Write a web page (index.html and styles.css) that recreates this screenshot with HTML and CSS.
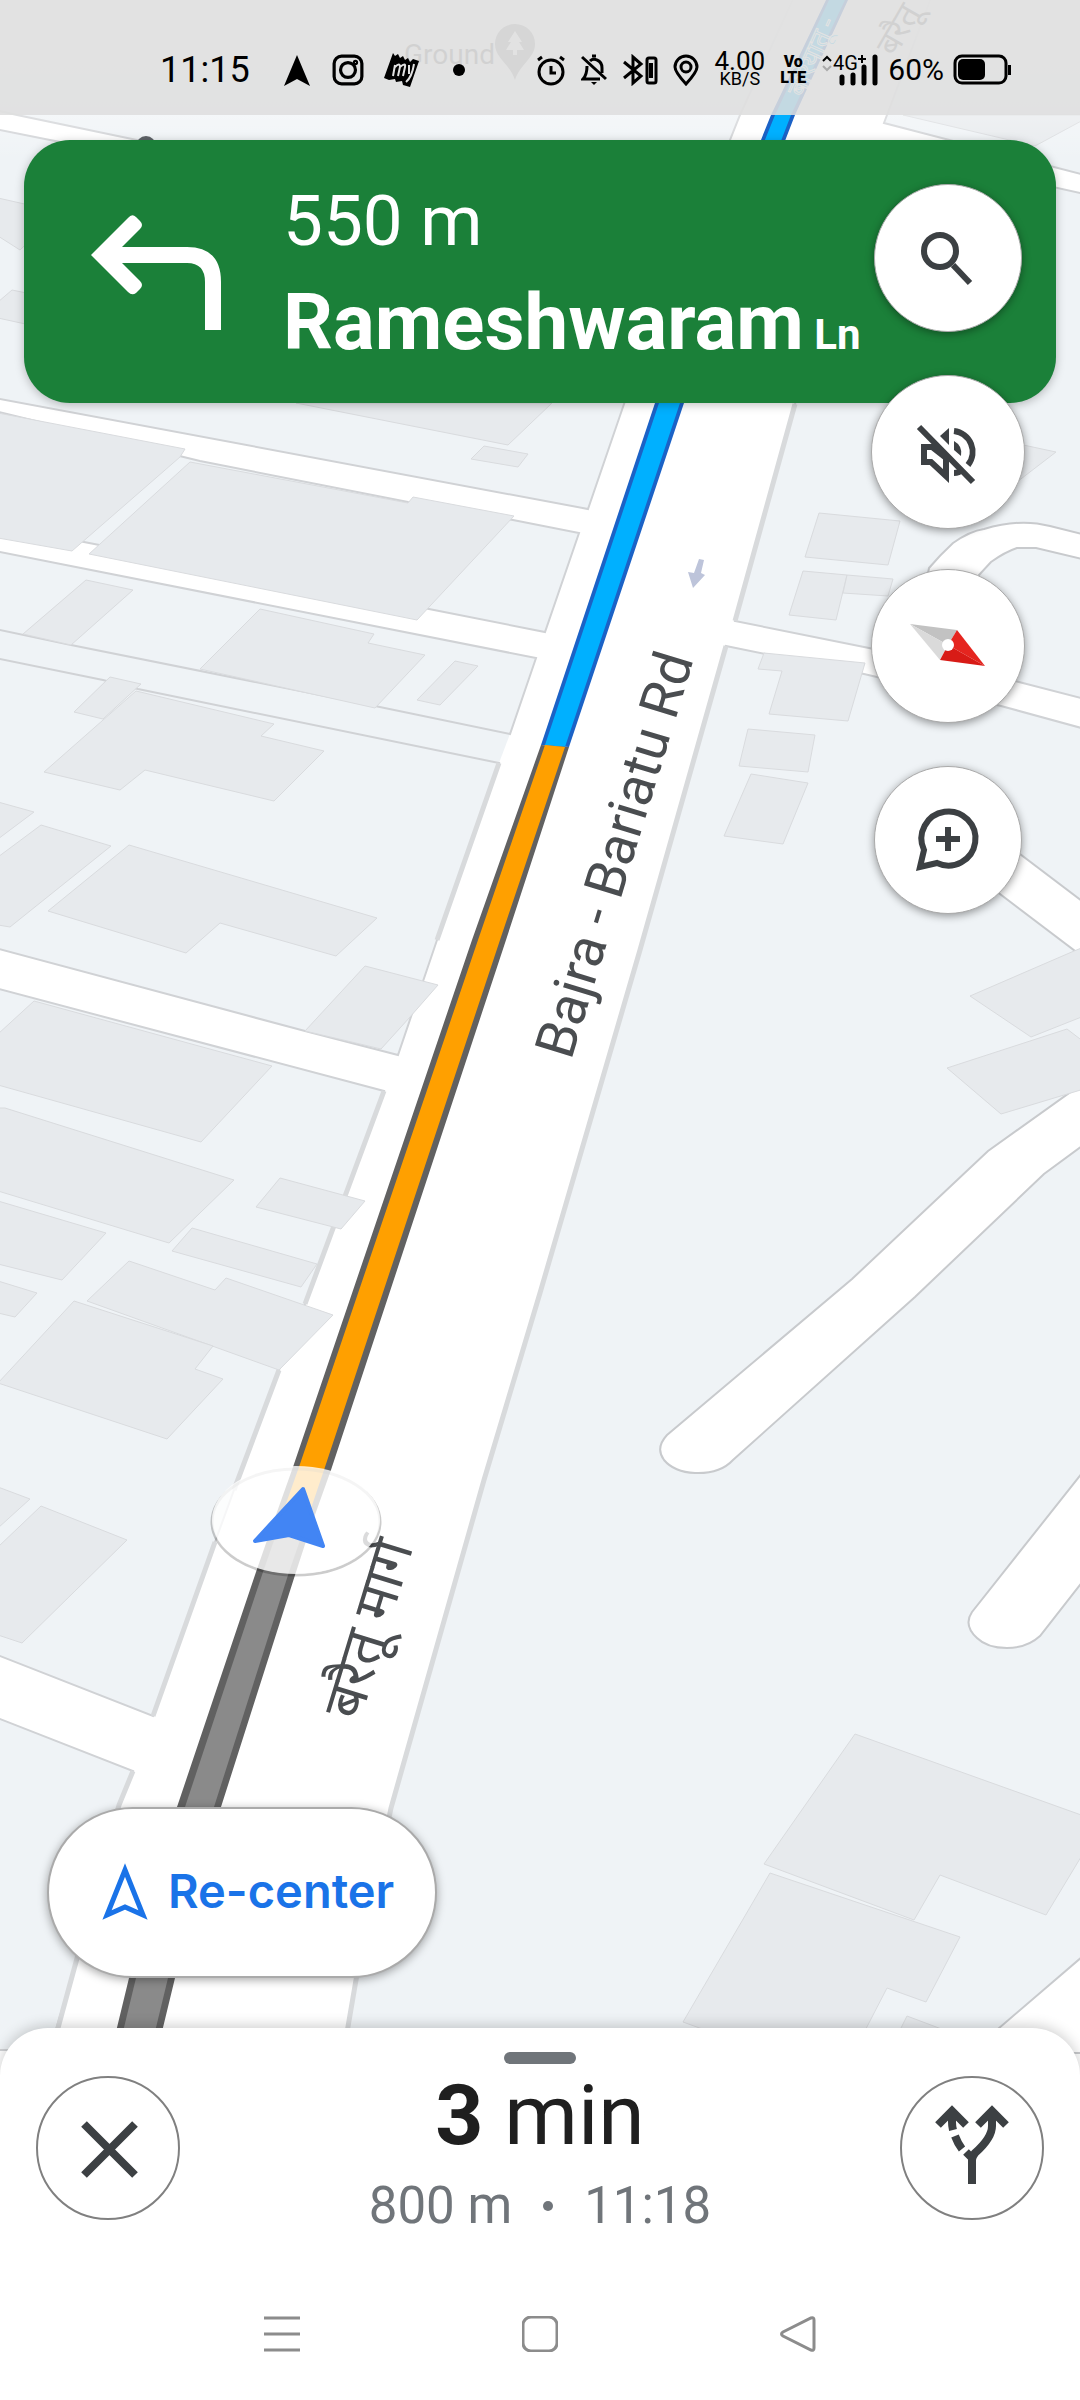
FILE: index.html
```html
<!DOCTYPE html>
<html lang="en">
<head>
    <meta charset="UTF-8">
    <meta name="viewport" content="width=device-width, initial-scale=1.0">
    <title>Navigation</title>
    <link rel="stylesheet" href="styles.css">
</head>
<body>
<div class="screen">

  <!-- Map -->
  <svg class="map" viewBox="0 0 1080 2400" preserveAspectRatio="xMidYMin slice" aria-label="Map">
    <defs>
      <linearGradient id="haze" x1="0" y1="0" x2="0" y2="1">
        <stop offset="0" stop-color="#fff" stop-opacity=".8"/>
        <stop offset=".6" stop-color="#fff" stop-opacity=".45"/>
        <stop offset="1" stop-color="#fff" stop-opacity="0"/>
      </linearGradient>
    </defs>

    <!-- Blocks of land between the roads -->
    <g class="land">
      <polygon points="-5,-5 795,-5 740,115 712,185 350,183 137,140 17,115 -5,110"/>
      <polygon points="-5,129 50,140 350,197 707,197 624,404 588,509 -5,398"/>
      <polygon points="-5,411 200,461 408,502 513,520 579,533 545,632 429,609 84,542 -5,525"/>
      <polygon class="no-edge" points="-5,628 510,734 499,763 -5,660"/>
      <polygon points="-5,551 536,658 510,734 375,706 71,645 -5,629"/>
      <polygon points="-5,658 103,680 138,689 499,763 437,940 398,1055 305,1031 -5,948"/>
      <polygon points="-5,988 384,1091 305,1304 279,1370 234,1490 215,1542 153,1716 -5,1654"/>
      <polygon points="-5,1717 133,1771 119,1805 76,1962 50,2050 -5,2050"/>
      <polygon points="932,-5 884,123 1085,175 1085,-5"/>
      <polygon points="876,148 1085,194 1085,699 1019,682 869,648 735,621 795,404"/>
      <polygon points="726,646 864,674 1001,706 1085,729 1085,2050 344,2050 356,1980 391,1808 484,1480 540,1293 640,950"/>
    </g>

    <!-- Edges of the main road -->
    <path class="main-edge" d="M795 404L735 621M726 646L640 950L540 1293L484 1480L391 1808L356 1980L344 2050M499 763L437 940M384 1091L305 1304M279 1370L234 1490M215 1542L153 1716M133 1771L119 1805L76 1962L52 2050"/>

    <!-- Side roads on the right -->
    <path class="road" d="M915 640L929 568Q940 555 953 543Q970 531 984 529Q1020 518 1050 526L1090 536V561L1036 548H1017Q1005 552 991 562L979 575L960 640Z"/>
    <path class="lane-edge" d="M960 836L1110 950" stroke-width="46"/>
    <path class="lane" d="M960 836L1110 950" stroke-width="42"/>
    <path class="road" d="M1090 1078L988 1151L852 1279L667 1435Q655 1448 664 1460Q674 1472 695 1473Q720 1474 733 1460L915 1297L1044 1174L1090 1140Z"/>
    <path class="road" d="M1090 1463L972 1612Q963 1625 977 1638Q987 1648 1007 1648Q1027 1648 1040 1636L1090 1572Z"/>
    <path class="road" d="M1090 1950L970 2053H1090Z"/>

    <!-- Buildings -->
    <g class="building">
      <polygon points="-2,198 60,212 20,250 -2,236"/>
      <polygon points="12,290 60,300 30,325 -2,318 -2,302"/>
      <polygon points="903,115 1085,115 1085,119 1035,146"/>
      <polygon points="296,403 508,445 552,403"/>
      <polygon points="484,446 528,454 518,467 471,459"/>
      <polygon points="-2,413 185,449 180,457 72,551 -2,538"/>
      <polygon points="190,462 408,503 413,497 514,516 417,620 89,554"/>
      <polygon points="86,580 133,590 71,645 23,634"/>
      <polygon points="260,609 374,634 368,643 425,655 375,708 200,669"/>
      <polygon points="455,661 478,666 440,705 417,700"/>
      <polygon points="110,677 141,684 103,719 74,712"/>
      <polygon points="136,691 274,724 261,736 324,751 274,801 145,770 120,790 44,772"/>
      <polygon points="-2,802 34,812 -2,839"/>
      <polygon points="41,825 111,846 10,927 -2,925 -2,857"/>
      <polygon points="129,845 377,918 336,956 220,923 186,953 48,911"/>
      <polygon points="365,966 438,985 410,1017 381,1049 305,1031"/>
      <polygon points="34,1001 272,1066 201,1142 -2,1085 -2,1034"/>
      <polygon points="5,1108 234,1180 169,1243 -2,1191 -2,1108"/>
      <polygon points="-2,1201 106,1233 62,1280 -2,1264"/>
      <polygon points="-2,1281 37,1293 15,1317 -2,1313"/>
      <polygon points="280,1178 365,1201 341,1229 256,1207"/>
      <polygon points="192,1228 317,1264 301,1287 172,1251"/>
      <polygon points="129,1261 215,1290 226,1278 333,1315 279,1370 87,1301"/>
      <polygon points="74,1301 213,1346 195,1369 223,1379 167,1439 -2,1383"/>
      <polygon points="-2,1487 30,1499 -2,1528"/>
      <polygon points="41,1506 127,1540 22,1643 -2,1635 -2,1547"/>
      <polygon points="1000,440 1056,452 1000,495"/>
      <polygon points="819,513 900,521 888,565 805,557"/>
      <polygon points="803,571 847,575 836,620 789,615"/>
      <polygon points="847,575 893,579 888,596 843,593"/>
      <polygon points="764,653 865,663 848,721 769,714 782,671 758,669"/>
      <polygon points="748,729 815,735 808,772 739,766"/>
      <polygon points="751,774 808,783 783,844 724,836"/>
      <polygon points="970,996 1074,951 1084,947 1084,1016 1031,1037"/>
      <polygon points="947,1068 1067,1029 1084,1042 1084,1089 1001,1114"/>
      <polygon points="855,1734 1084,1816 1084,1852 1046,1915 940,1875 914,1920 764,1864"/>
      <polygon points="770,1873 960,1937 926,2002 887,1988 855,2050 760,2050 683,2022"/>
      <polygon points="907,2016 960,2036 890,2050"/>
    </g>
    <rect width="1080" height="160" fill="url(#haze)"/>

    <!-- Route -->
    <polygon fill="#1b62c6" points="826,0 848,0 795,115 684,403 569,747 541,745 655,403 771,115"/>
    <polygon fill="#00b0ff" points="829,0 845,0 791,115 680,403 565,747 545,745 659,403 775,115"/>
    <polygon fill="#616161" points="541,745 569,747 506,940 331,1470 311,1526 272,1526 293,1467 472,940"/>
    <polygon fill="#ffa000" points="545,745 565,747 500,940 324,1470 305,1526 278,1526 299,1467 478,940"/>
    <polygon fill="#616161" points="272,1526 311,1526 296,1572 221,1807 175,1978 160,2040 114,2040 129,1978 177,1807 256,1572"/>
    <polygon fill="#8a8a8a" points="279,1526 305,1526 289,1572 214,1807 168,1978 153,2040 121,2040 136,1978 185,1807 263,1572"/>
    <path class="one-way" d="M699 559l5 1l-3 13l4 2l-12 13l-5 -16l6 1z"/>

    <!-- Labels -->
    <text class="road-label" transform="translate(571 1061) rotate(-73)">Bajra - Bariatu Rd</text>
    <text class="road-label hindi" transform="translate(360 1722) rotate(-73)">बरैतू मार्ग</text>
    <text class="road-label far" transform="translate(895 58) rotate(-60)">बरैतू</text>
    <text class="route-label" transform="translate(803 98) rotate(-66)">बरियातू -</text>
    <text class="place-label" x="404" y="64">Ground</text>
    <path class="place-pin" d="M515 24a20 20 0 0 0-20 20c0 14 15 20 20 36c5-16 20-22 20-36a20 20 0 0 0-20-20z"/>
    <path fill="#fff" d="M515 31l-7 11h3l-5 8h7v5h4v-5h7l-5-8h3z"/>
    <circle cx="146" cy="146" r="10" fill="#5f6368"/>

    <!-- Current position -->
    <ellipse class="position-shadow" cx="296" cy="1522" rx="84" ry="53"/>
    <ellipse class="position-disc" cx="296" cy="1520" rx="84" ry="54"/>
    <path class="position-arrow" d="M303 1489L323 1546L289 1535L255 1541Z"/>
  </svg>

  <!-- Status bar -->
  <header class="status-bar">
    <div class="status-left">
      <span class="clock">11:15</span>
      <svg width="30" height="34" viewBox="0 0 30 34"><path d="M15 2L28 33L15 26L2 33Z"/></svg>
      <svg width="32" height="32" viewBox="0 0 30 30" class="line"><rect x="2" y="2" width="26" height="26" rx="7"/><circle cx="15" cy="15" r="7"/><circle cx="22" cy="8" r="1"/></svg>
      <svg width="36" height="36" viewBox="0 0 36 36"><path d="M9 1l2 3l3-2l2 4l3-2l2 4l3-2l2 4l3-3l6 2l-9 26l-7-2l-1-4l-6 1l-1-3l-6 1l-5-2z"/><path d="M9 24l2-11M11 15q5-5 5 0l-2 9M16 15q6-5 5 0l-2 9M25 13l0 9M30 12q-2 13-8 18" fill="none" stroke="#e1e1e1" stroke-width="2"/></svg>
      <svg width="38" height="12" viewBox="0 0 38 12"><circle cx="19" cy="6" r="6"/></svg>
    </div>
    <div class="status-right">
      <svg width="30" height="32" viewBox="0 0 30 32" class="line"><circle cx="15" cy="18" r="12"/><path d="M15 12v7h5M2 6l4-3M24 3l4 3"/></svg>
      <svg width="26" height="32" viewBox="0 0 26 32" class="line"><path d="M9 7q3-3 7-1q5 2 5 8v5M6 12q0 9-4 13h17M11 2h4M1 3l24 22"/><path d="M10 28h6l-3 3z" class="solid"/></svg>
      <svg width="36" height="32" viewBox="0 0 36 32" class="line"><path d="M2 8l17 14l-8 7v-26l8 7l-17 14"/><rect x="25" y="4" width="9" height="25" rx="2"/><path d="M29 9v15" stroke-width="4"/></svg>
      <svg width="26" height="32" viewBox="0 0 26 32" class="line"><path d="M13 30q-11-12-11-17a11 11 0 0 1 22 0q0 5-11 17z"/><circle cx="13" cy="13" r="5"/></svg>
      <div class="net-speed"><span>4.00</span><small>KB/S</small></div>
      <div class="volte"><span>Vo</span><span>LTE</span></div>
      <div class="signal-group">
        <svg width="58" height="34" viewBox="0 0 58 34">
          <path d="M2 8l4-4l4 4" class="arrow-up"/><path d="M2 13l4 4l4-4" class="arrow-down"/>
          <text x="12" y="17" class="net-type">4G</text>
          <path d="M37 6h8M41 2v8" stroke="#000" stroke-width="2"/>
          <path d="M21 24v6M32 22v8M43 14v16M54 4v26" stroke="#000" stroke-width="5" stroke-linecap="round"/>
        </svg>
        <span class="battery-level">60%</span>
        <svg width="58" height="32" viewBox="0 0 58 32"><rect x="2" y="2" width="51" height="27" rx="7" fill="none" stroke="#000" stroke-width="3"/><rect x="5" y="5" width="27" height="21" rx="5"/><path d="M55 11h3v10h-3z"/></svg>
      </div>
    </div>
  </header>

  <!-- Next turn -->
  <section class="banner">
    <svg class="turn-icon" width="130" height="116" viewBox="91 215 130 116" aria-label="Turn left">
      <path d="M221 330H205V282Q205 263 187 263H122L140 281Q144 285 140 289L136 293Q132 296 128 292L91 255L128 218Q132 213 136 217L140 221Q144 225 140 229L122 247H187Q221 247 221 282Z"/>
    </svg>
    <div class="turn-text">
      <p class="distance">550 m</p>
      <h1 class="street">Rameshwaram<small> Ln</small></h1>
    </div>
  </section>

  <!-- Floating map buttons -->
  <div class="map-controls">
    <button type="button" class="round-button small" aria-label="Search">
      <svg width="148" height="148" viewBox="0 0 148 148"><circle cx="66" cy="67" r="16"/><path d="M79 81L96 99"/></svg>
    </button>
    <button type="button" class="round-button" aria-label="Sound off">
      <svg width="154" height="154" viewBox="0 0 154 154"><path d="M48 52L102 107M53 87V72H61L75 83V101L60 87ZM83 56A21 21 0 0 1 97 90M83 98q5 0 8-3"/><path class="fill" d="M69 61L78 53V70ZM83 66Q92 71 90 81L83 75Z"/></svg>
    </button>
    <button type="button" class="round-button" aria-label="Compass">
      <svg width="154" height="154" viewBox="0 0 154 154" class="compass"><path fill="#c2c2c2" d="M39 55L86 61L77 76Z"/><path fill="#dadada" d="M39 55L77 76L69 91Z"/><path fill="#e5251f" d="M86 61L114 97L77 76Z"/><path fill="#d81b16" d="M114 97L69 91L77 76Z"/><circle cx="77" cy="76" r="6" fill="#fff"/></svg>
    </button>
    <button type="button" class="round-button small" aria-label="Add a report">
      <svg width="148" height="148" viewBox="0 0 148 148"><path d="M46 101L50 84A27 27 0 1 1 63 97Z"/><path d="M62 73h24M74 61v24"/></svg>
    </button>
  </div>

  <main class="map-area">
    <button type="button" class="recenter">
      <svg width="46" height="58" viewBox="0 0 46 58"><path d="M23 8L41 53L23 45L5 53Z"/></svg>
      Re-center
    </button>
  </main>

  <!-- Trip summary -->
  <footer class="sheet">
    <div class="handle"></div>
    <div class="trip">
      <button type="button" class="outline-button" aria-label="Close">
        <svg width="144" height="144" viewBox="0 0 144 144"><path d="M48 48L99 99M99 48L48 99"/></svg>
      </button>
      <div class="trip-text">
        <p class="duration"><b>3</b> min</p>
        <p class="details"><span>800 m</span><i class="dot"></i><span>11:18</span></p>
      </div>
      <button type="button" class="outline-button" aria-label="Alternative routes">
        <svg width="144" height="144" viewBox="0 0 144 144"><path d="M72 108V84Q72 81 75 77Q92 62 92 50V38M78 49L92 35L106 49M38 49L52 35L66 49M52 38V46Q52 50 53 54M55 60Q58 68 62 73M66 76L73 83"/></svg>
      </button>
    </div>
    <nav class="system-nav">
      <button type="button" aria-label="Recent apps"><svg width="36" height="36" viewBox="0 0 36 36"><path d="M0 2h36M0 18h36M0 34h36"/></svg></button>
      <button type="button" aria-label="Home"><svg width="36" height="36" viewBox="0 0 36 36"><rect x="1" y="1" width="34" height="34" rx="8"/></svg></button>
      <button type="button" aria-label="Back"><svg width="36" height="36" viewBox="0 0 36 36"><path d="M31 2q3-1 3 2v28q0 3-3 2L3 20q-3-2 0-4z"/></svg></button>
    </nav>
  </footer>

</div>
</body>
</html>
```
FILE: styles.css
```css
:root {
    --ink: #3c4043;
    --muted: #70757a;
    --green: #1b8039;
    --blue: #1a73e8;
}

* {
    box-sizing: border-box;
}

body {
    margin: 0;
    font-family: Roboto, "Noto Sans", sans-serif;
    background-color: #fff;
}

p, h1 {
    margin: 0;
}

button {
    padding: 0;
    border: none;
    background: none;
    font: inherit;
    cursor: pointer;
}

svg {
    display: block;
    flex: none;
}

.screen {
    position: relative;
    display: flex;
    flex-direction: column;
    min-height: 100vh;
    overflow: hidden;
}

/* Map */
.map {
    position: absolute;
    top: 0;
    left: 0;
    width: 100%;
    height: 100%;
    background-color: #fff;
}

.land polygon {
    fill: #eff3f6;
    stroke: #d0d2d5;
    stroke-width: 2;
}

.land .no-edge {
    stroke: none;
}

.main-edge {
    fill: none;
    stroke: #d8dadc;
    stroke-width: 5;
}

.building polygon {
    fill: #e7eaed;
    stroke: #d9dbde;
    stroke-width: 1;
}

.road {
    fill: #fff;
    stroke: #c8cacd;
    stroke-width: 2;
}

.lane, .lane-edge {
    fill: none;
    stroke: #fff;
}

.lane-edge {
    stroke: #c8cacd;
}

.one-way {
    fill: #bdc4da;
}

.road-label {
    font-size: 55px;
    fill: #4a4d50;
}

.hindi {
    font-size: 57px;
}

.far {
    font-size: 34px;
    fill: #777;
}

.route-label {
    font-size: 26px;
    fill: #00b0ff;
    stroke: #fff;
    stroke-width: 1;
}

.place-label {
    font-size: 28px;
    fill: #777;
}

.place-pin {
    fill: #999;
}

.position-shadow {
    fill: none;
    stroke: #000;
    stroke-width: 3;
    opacity: 0.2;
}

.position-disc {
    fill: #fff;
    opacity: 0.8;
}

.position-arrow {
    fill: #4285f4;
    stroke: #4285f4;
    stroke-width: 4;
    stroke-linejoin: round;
}

/* Status bar */
.status-bar {
    position: relative;
    display: flex;
    justify-content: space-between;
    height: 115px;
    padding: 24px 69px 0 160px;
    background-color: rgba(222, 222, 222, 0.88);
}

.status-left, .status-right, .signal-group {
    display: flex;
    align-items: center;
    gap: 20px;
}

.status-right {
    gap: 15px;
}

.signal-group {
    gap: 9px;
}

.clock {
    margin-right: 12px;
    font-size: 36px;
}

.line {
    fill: none;
    stroke: #000;
    stroke-width: 3;
}

.solid {
    fill: #000;
    stroke: none;
}

.net-speed, .volte {
    display: flex;
    flex-direction: column;
    align-items: center;
    font-size: 26px;
    line-height: 18px;
}

.net-speed small {
    font-size: 18px;
}

.volte {
    font-size: 16px;
    font-weight: 900;
    line-height: 16px;
}

.net-type {
    font-size: 20px;
}

.arrow-up, .arrow-down {
    fill: none;
    stroke: #000;
    stroke-width: 2;
}

.arrow-down {
    stroke: #aaa;
}

.battery-level {
    font-size: 30px;
}

/* Next turn banner */
.banner {
    position: relative;
    display: flex;
    align-items: center;
    gap: 62px;
    margin: 25px 24px 0;
    padding: 31px 67px 28px;
    border-radius: 46px;
    background-color: var(--green);
    box-shadow: 0 2px 10px rgba(0, 0, 0, 0.25);
    color: #fff;
}

.turn-icon {
    fill: #fff;
}

.distance {
    font-size: 71px;
    line-height: 100px;
}

.street {
    font-size: 78px;
    line-height: 104px;
    font-weight: 700;
    white-space: nowrap;
}

.street small {
    font-size: 42px;
    line-height: 42px;
}

/* Floating buttons */
.map-controls {
    position: absolute;
    top: 181px;
    right: 55px;
    display: flex;
    flex-direction: column;
    gap: 40px;
}

.round-button {
    width: 154px;
    height: 154px;
    border: 1px solid #aaa;
    border-radius: 50%;
    background-color: #fff;
    box-shadow: 0 2px 8px rgba(0, 0, 0, 0.4);
}

.round-button.small {
    width: 148px;
    height: 148px;
    margin: 3px;
}

.round-button svg {
    margin: -1px;
    fill: none;
    stroke: var(--ink);
    stroke-width: 6;
}

.round-button .fill {
    fill: var(--ink);
    stroke: none;
}

.round-button .compass {
    stroke: none;
}

/* Free map space with the re-center button at its foot */
.map-area {
    flex: 1;
    display: flex;
    align-items: flex-end;
    padding: 0 47px 50px;
}

.recenter {
    position: relative;
    display: flex;
    align-items: center;
    gap: 20px;
    height: 171px;
    padding: 0 41px 4px 53px;
    border: 2px solid #aaa;
    border-radius: 86px;
    background-color: #fff;
    box-shadow: 0 2px 10px rgba(0, 0, 0, 0.35);
    color: var(--blue);
    font-family: Inter, Roboto, sans-serif;
    font-size: 47px;
    font-weight: 600;
}

.recenter svg {
    fill: none;
    stroke: var(--blue);
    stroke-width: 5;
}

/* Trip summary sheet */
.sheet {
    position: relative;
    padding-top: 24px;
    border-radius: 48px 48px 0 0;
    background-color: #fff;
    box-shadow: 0 -2px 14px rgba(0, 0, 0, 0.2);
}

.handle {
    width: 72px;
    height: 12px;
    margin: 0 auto 12px;
    border-radius: 6px;
    background-color: var(--muted);
}

.trip {
    display: flex;
    justify-content: space-between;
    padding: 0 36px;
}

.outline-button {
    width: 144px;
    height: 144px;
    border: 2px solid #808080;
    border-radius: 50%;
}

.outline-button svg {
    margin: -2px;
    fill: none;
    stroke: var(--ink);
    stroke-width: 8;
}

.trip-text {
    display: flex;
    flex-direction: column;
    align-items: center;
    gap: 20px;
}

.duration {
    color: #1f1f1f;
    font-size: 84px;
    line-height: 80px;
}

.details {
    display: flex;
    align-items: center;
    gap: 31px;
    color: var(--muted);
    font-size: 51px;
    line-height: 60px;
}

.dot {
    width: 10px;
    height: 10px;
    border-radius: 50%;
    background-color: var(--muted);
}

/* System navigation */
.system-nav {
    display: grid;
    grid-template-columns: repeat(3, 1fr);
    height: 132px;
    margin-top: 32px;
    padding: 0 153px;
}

.system-nav button {
    display: grid;
    place-items: center;
}

.system-nav svg {
    fill: none;
    stroke: #8c8c8c;
    stroke-width: 3;
}
```
